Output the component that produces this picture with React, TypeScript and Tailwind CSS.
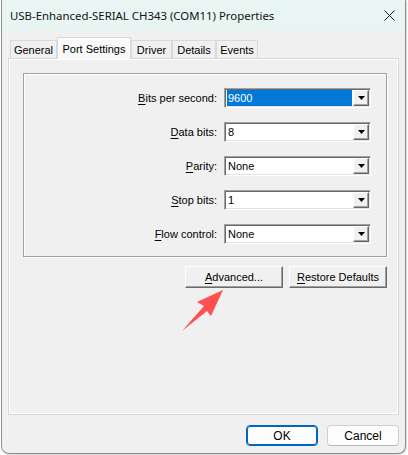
import React from 'react';

const ui = { fontFamily: '"Liberation Sans", Arial, sans-serif' };
const title = { fontFamily: '"Noto Sans", "Open Sans", sans-serif' };

type Field = { label: string; key: string; rest: string; value: string; selected?: boolean };

const fields: Field[] = [
  { label: 'Bits per second', key: 'B', rest: 'its per second:', value: '9600', selected: true },
  { label: 'Data bits', key: 'D', rest: 'ata bits:', value: '8' },
  { label: 'Parity', key: 'P', rest: 'arity:', value: 'None' },
  { label: 'Stop bits', key: 'S', rest: 'top bits:', value: '1' },
  { label: 'Flow control', key: 'F', rest: 'low control:', value: 'None' },
];

// classic sunken combo box with a raised drop button
function Combo({ value, selected }: { value: string; selected?: boolean }) {
  return (
    <div className="flex h-[20px] w-[147px] items-stretch border border-t-[#a0a0a0] border-l-[#a0a0a0] border-b-white border-r-white bg-white p-px shadow-[inset_1px_1px_0_#696969,inset_-1px_-1px_0_#e3e3e3]">
      <div className="flex flex-1 items-center pl-px pr-[1px]">
        <span
          className={`flex h-[16px] w-full items-center pl-[1px] text-[11px] leading-none ${
            selected ? 'bg-[#0078d7] text-white' : 'text-black'
          }`}
        >
          {value}
        </span>
      </div>
      <div className="flex w-[16px] items-center justify-center border border-t-white border-l-white border-b-[#696969] border-r-[#696969] bg-[#f0f0f0] shadow-[inset_-1px_-1px_0_#a0a0a0]">
        <svg width="7" height="4" viewBox="0 0 7 4">
          <path d="M0 0h7L3.5 4z" fill="#000" />
        </svg>
      </div>
    </div>
  );
}

function ClassicButton({ k, rest }: { k: string; rest: string }) {
  return (
    <button className="flex h-[22px] w-[98px] items-center justify-center border border-t-white border-l-white border-b-[#696969] border-r-[#696969] bg-[#f0f0f0] text-[11px] text-black shadow-[inset_-1px_-1px_0_#a0a0a0]">
      <span className="underline underline-offset-2">{k}</span>
      {rest}
    </button>
  );
}

export default function App() {
  const tabs = [
    { name: 'General', w: 'w-[47px]' },
    { name: 'Port Settings', w: 'w-[74px]', active: true },
    { name: 'Driver', w: 'w-[41px]' },
    { name: 'Details', w: 'w-[44px]' },
    { name: 'Events', w: 'w-[42px]' },
  ];

  return (
    <div className="relative h-[455px] w-[408px] bg-white" style={ui}>
      <div className="ml-px flex h-[454px] w-[405px] flex-col overflow-hidden rounded-b-[8px] border-x border-b border-[#8e8e8e] bg-[#f0f0f0] shadow-[1px_1px_1px_rgba(0,0,0,0.15)]">
        {/* title bar */}
        <div className="flex h-[31px] items-center justify-between bg-[#e9f5f2] pl-[8px] pr-[8px]">
          <span className="text-[11.4px] text-[#111]" style={title}>
            USB-Enhanced-SERIAL CH343 (COM11) Properties
          </span>
          <svg width="11" height="11" viewBox="0 0 11 11" className="mr-[2px]">
            <path d="M0.5 0.5l10 10M10.5 0.5l-10 10" stroke="#1a1a1a" strokeWidth="1" />
          </svg>
        </div>

        <div className="flex flex-1 flex-col px-[6px] pt-[6px]">
          {/* tabs */}
          <div className="flex h-[21px] items-end pl-[2px]">
            {tabs.map((t) =>
              t.active ? (
                <div
                  key={t.name}
                  className={`relative z-10 -mb-px flex h-[22px] ${t.w} items-start justify-center border border-b-0 border-[#d9d9d9] bg-[#f9f9f9] pt-[3px] text-[11px] text-black`}
                >
                  {t.name}
                </div>
              ) : (
                <div
                  key={t.name}
                  className={`flex h-[18px] ${t.w} items-center justify-center border border-b-0 border-[#d9d9d9] bg-[#f0f0f0] pt-px text-[11px] text-black`}
                >
                  {t.name}
                </div>
              )
            )}
          </div>

          {/* tab page */}
          <div className="flex h-[357px] flex-col border border-[#d9d9d9] bg-[#f0f0f0] pl-[14px] pt-[14px] shadow-[inset_1px_1px_0_#fff,inset_-1px_-1px_0_#fff]">
            <div className="w-[364px]">
              <div className="flex flex-col gap-[14px] border border-[#a0a0a0] pb-[12px] pt-[14px] shadow-[inset_1px_1px_0_#fff,1px_1px_0_#fff]">
                {fields.map((f) => (
                  <div key={f.label} className="flex items-center">
                    <div className="w-[194px] pr-[1px] text-right text-[11px] text-black">
                      <span className="underline underline-offset-2">{f.key}</span>
                      {f.rest}
                    </div>
                    <div className="ml-[6px]">
                      <Combo value={f.value} selected={f.selected} />
                    </div>
                  </div>
                ))}
              </div>

              <div className="mt-[9px] flex justify-end gap-[6px]">
                <ClassicButton k="A" rest="dvanced..." />
                <ClassicButton k="R" rest="estore Defaults" />
              </div>
            </div>
          </div>

          {/* dialog buttons */}
          <div className="mt-[10px] flex justify-end gap-[9px]">
            <button className="flex h-[21px] w-[72px] items-center justify-center rounded-[4px] border border-[#0067c0] bg-[#fdfdfd] text-[12px] text-black shadow-[inset_0_0_0_1px_#0067c0]">
              OK
            </button>
            <button className="flex h-[21px] w-[72px] items-center justify-center rounded-[4px] border border-[#d0d0d0] border-b-[#b8b8b8] bg-[#fdfdfd] text-[12px] text-black">
              Cancel
            </button>
          </div>
        </div>
      </div>

      {/* red pointer arrow */}
      <svg className="pointer-events-none absolute left-0 top-0" width="408" height="455" viewBox="0 0 408 455">
        <polygon points="223,290 211,316 207,311 182,331 204,306 197,302" fill="#ff4f4f" />
      </svg>
    </div>
  );
}
